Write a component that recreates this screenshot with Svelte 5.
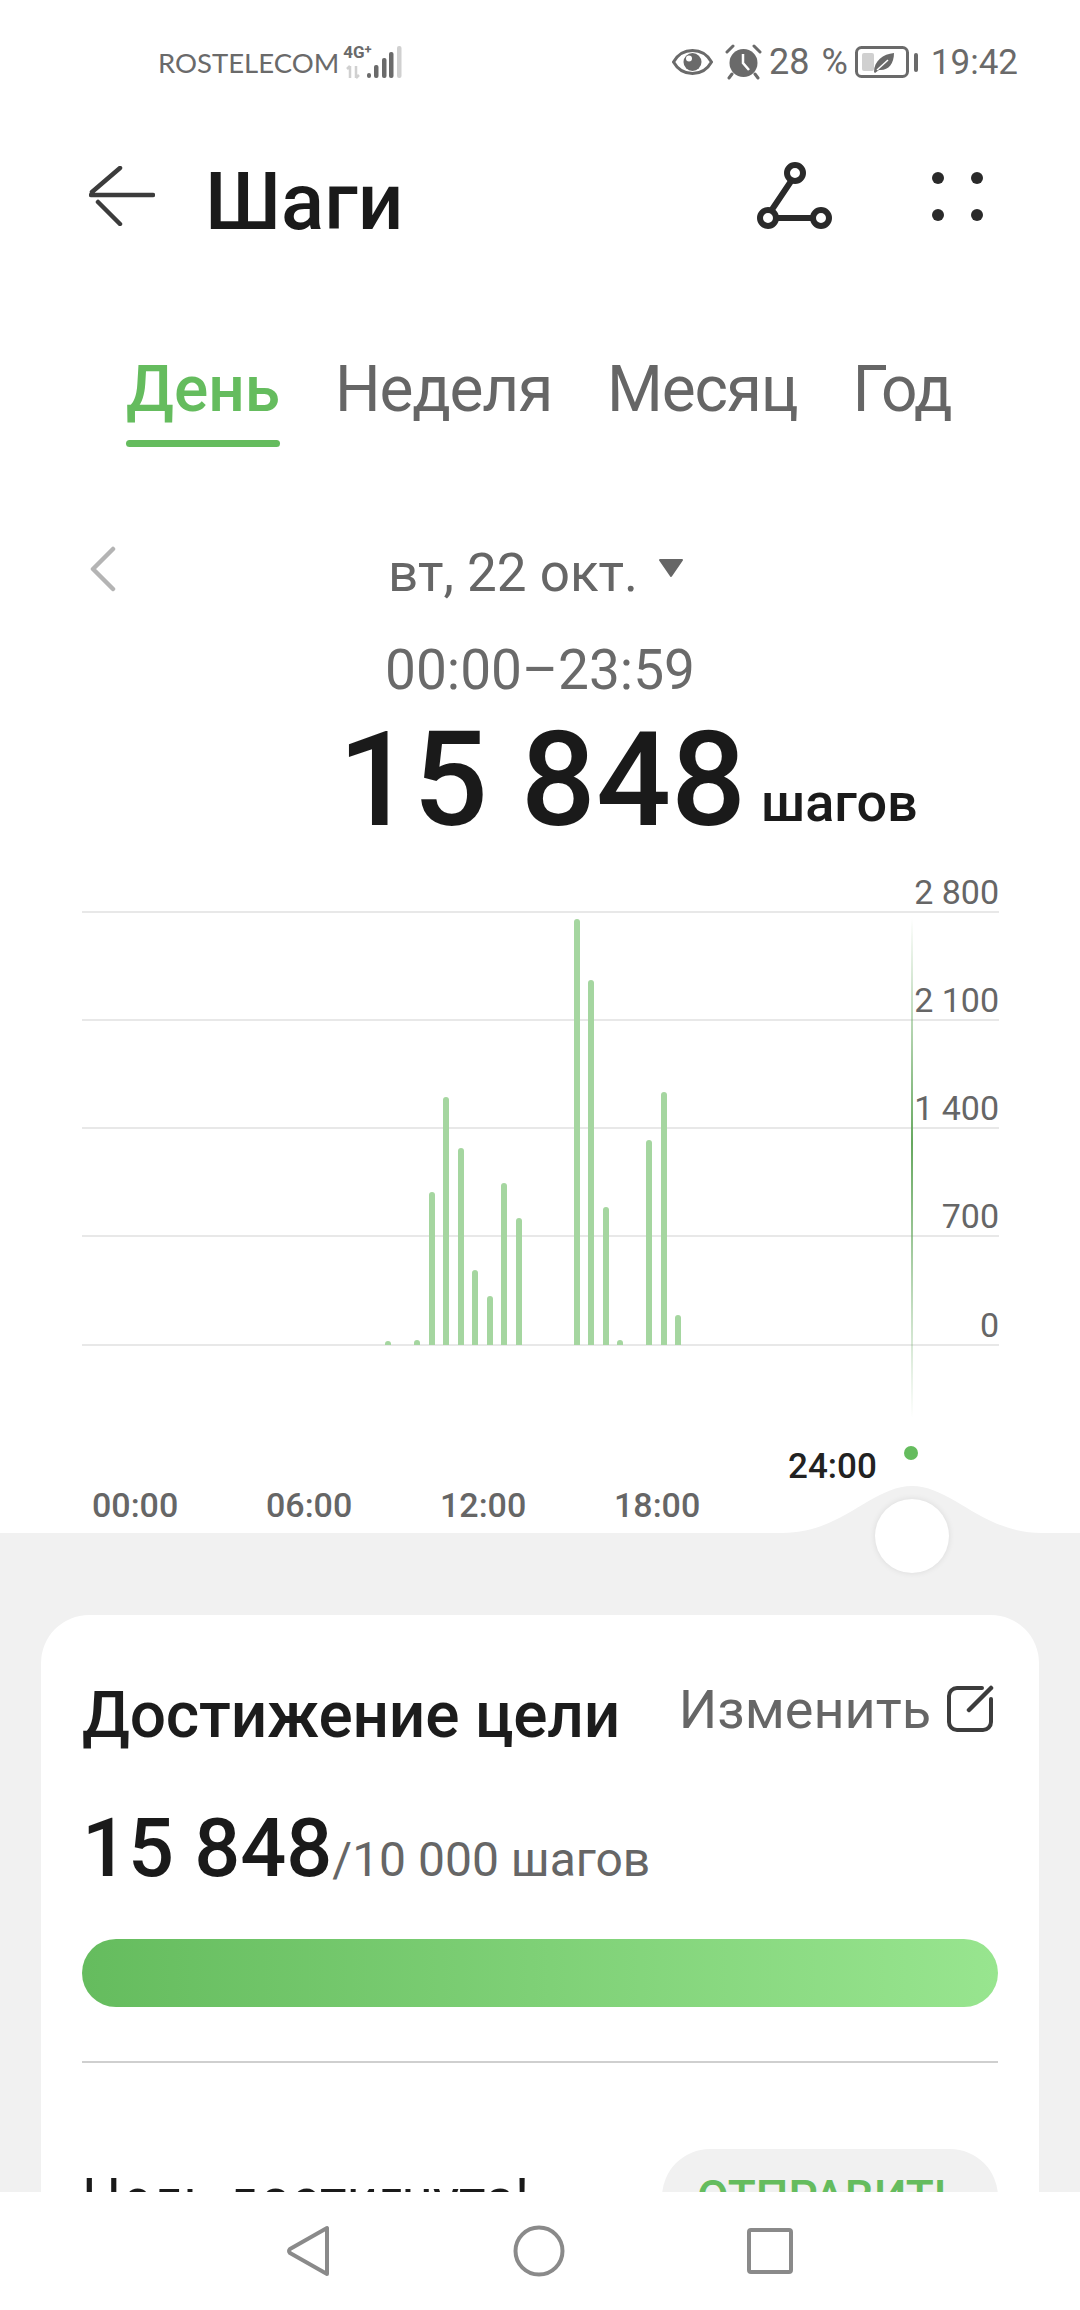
<script lang="ts">
  const tabs = ['День', 'Неделя', 'Месяц', 'Год'];
  const scale = [
    { label: '2 800', y: 0 },
    { label: '2 100', y: 108 },
    { label: '1 400', y: 216 },
    { label: '700', y: 324 },
    { label: '0', y: 433 }
  ];
  const hours = ['00:00', '06:00', '12:00', '18:00'];

  // bar centre on the chart, and height above the zero line
  const bars = [
    [306, 4], [335, 5], [350, 153], [364, 248], [379, 197], [393, 75], [408, 49],
    [422, 162], [437, 127], [495, 426], [509, 365], [524, 138], [538, 5],
    [567, 205], [582, 253], [596, 30]
  ];
</script>

<div class="phone">
  <div class="screen">
    <header class="status">
      <div class="carrier">
        <span>ROSTELECOM</span>
        <div class="signal">
          <span class="net">4G<sup>+</sup></span>
          <svg width="62" height="34" viewBox="0 0 62 34">
            <path d="M9 21v12M6 24l3-3M15 21v12M18 30l-3 3" stroke="#d0d0d0" stroke-width="2.500" fill="none" />
            <rect x="26" y="28" width="4" height="5" rx="2" fill="#6a6a6a" />
            <rect x="33" y="20" width="4.500" height="13" rx="2" fill="#6a6a6a" />
            <rect x="41" y="13" width="4.500" height="20" rx="2" fill="#6a6a6a" />
            <rect x="48" y="7" width="4.500" height="26" rx="2" fill="#6a6a6a" />
            <rect x="56" y="1" width="4.500" height="32" rx="2" fill="#d0d0d0" />
          </svg>
        </div>
      </div>
      <div class="sys">
        <svg class="eye" width="41" height="28" viewBox="0 0 41 28">
          <path d="M1.500 14C6 6 13 2.500 20.500 2.500S35 6 39.500 14C35 22 28 25.500 20.500 25.500S6 22 1.500 14Z" fill="none" stroke="#6a6a6a" stroke-width="3" />
          <circle cx="20.500" cy="14" r="9" fill="#6a6a6a" />
          <circle cx="17" cy="10.500" r="3" fill="#fff" />
        </svg>
        <svg class="alarm" width="37" height="36" viewBox="0 0 37 36">
          <circle cx="18.500" cy="19" r="14" fill="#6a6a6a" />
          <path d="M18 10v9l6 7" fill="none" stroke="#fff" stroke-width="2.500" />
          <path d="M2 8l6-6M35 8l-6-6M7 30l-3 4M30 30l3 4" stroke="#6a6a6a" stroke-width="3" stroke-linecap="round" />
        </svg>
        <span class="pct">28 %</span>
        <svg class="batt" width="63" height="32" viewBox="0 0 63 32">
          <rect x="1.500" y="1.500" width="51" height="29" rx="5" fill="none" stroke="#6a6a6a" stroke-width="3" />
          <rect x="7" y="7" width="12" height="18" rx="2" fill="#d0d0d0" />
          <path d="M19 26C19 15 28 8 39 7 39 18 33 25 24 24L20 27Z" fill="#6a6a6a" />
          <path d="M22 24 33 14" stroke="#fff" stroke-width="1.500" />
          <rect x="59" y="7" width="4" height="19" rx="2" fill="#6a6a6a" />
        </svg>
        <span class="clock">19:42</span>
      </div>
    </header>

    <div class="appbar">
      <svg class="back" width="66" height="60" viewBox="0 0 66 60">
        <path d="M2 29H64M31 2 3 26M31 58 9 36" fill="none" stroke="#3c3c3c" stroke-width="4.500" stroke-linecap="round" />
      </svg>
      <h1>Шаги</h1>
      <svg class="route" width="76" height="68" viewBox="0 0 76 68">
        <circle cx="38" cy="11" r="8" />
        <circle cx="11" cy="56" r="8" />
        <circle cx="64" cy="56" r="8" />
        <path d="M34.500 18.500 14 49M19 56H56" />
      </svg>
      <div class="dots"><i></i><i></i><i></i><i></i></div>
    </div>

    <nav class="tabs">
      {#each tabs as tab, i}
        <span class="tab" class:active={i === 0}>{tab}</span>
      {/each}
    </nav>

    <div class="date-row">
      <svg class="prev" width="28" height="46" viewBox="0 0 28 46">
        <path d="M25 3 5 23 25 43" fill="none" stroke="#b4b4b4" stroke-width="4.500" stroke-linecap="round" stroke-linejoin="round" />
      </svg>
      <span class="date">вт, 22 окт.</span>
      <svg class="caret" width="30" height="20" viewBox="0 0 30 20">
        <path d="M4 2H26L15 18Z" fill="#666" stroke="#666" stroke-width="2" stroke-linejoin="round" />
      </svg>
    </div>
    <div class="range">00:00–23:59</div>
    <div class="total"><span class="num">15 848</span><span class="unit">шагов</span></div>

    <div class="chart">
      {#each scale as s}
        <div class="grid" style="top: {s.y}px"></div>
        <span class="tick" style="top: {s.y - 39}px">{s.label}</span>
      {/each}
      {#each bars as [x, h]}
        <div class="bar" style="left: {x - 3}px; height: {h}px"></div>
      {/each}
      <div class="cursor"></div>
      <div class="dot"></div>
      <span class="now">24:00</span>
      {#each hours as h, i}
        <span class="hour" style="left: {10 + i * 174}px">{h}</span>
      {/each}
    </div>

    <div class="lower">
      <svg class="hump" width="260" height="48" viewBox="0 0 260 48">
        <path d="M0 47C60 47 90 0 130 0S200 47 260 47V48H0Z" fill="#f1f1f1" />
      </svg>
      <div class="thumb"></div>

      <section class="card">
        <div class="card-head">
          <h2>Достижение цели</h2>
          <span class="edit">Изменить</span>
          <svg class="edit-icon" width="48" height="48" viewBox="0 0 48 48">
            <path d="M36 3H11a8 8 0 0 0-8 8v26a8 8 0 0 0 8 8h26a8 8 0 0 0 8-8V14" fill="none" stroke="#3c3c3c" stroke-width="4" stroke-linecap="round" />
            <path d="M23 25 45 3" stroke="#3c3c3c" stroke-width="4.500" stroke-linecap="round" />
          </svg>
        </div>
        <div class="goal"><b>15 848</b><span>/10 000 шагов</span></div>
        <div class="progress"></div>
        <div class="divider"></div>
        <div class="done">
          <span>Цель достигнута!</span>
          <button>ОТПРАВИТЬ</button>
        </div>
      </section>
    </div>
  </div>

  <footer class="navbar">
    <svg width="44" height="52" viewBox="0 0 44 52">
      <path d="M40 3V49L3 28Q1 26 3 24Z" fill="none" stroke="#8a8a8a" stroke-width="4" stroke-linejoin="round" />
    </svg>
    <svg width="52" height="52" viewBox="0 0 52 52">
      <circle cx="26" cy="26" r="23.500" fill="none" stroke="#8a8a8a" stroke-width="4" />
    </svg>
    <svg width="46" height="46" viewBox="0 0 46 46">
      <rect x="2" y="2" width="42" height="42" rx="2" fill="none" stroke="#8a8a8a" stroke-width="4" />
    </svg>
  </footer>
</div>

<style>
  :global(body) {
    margin: 0;
    background: #fff;
  }

  .phone {
    width: 1080px;
    height: 2310px;
    display: flex;
    flex-direction: column;
    overflow: hidden;
    font-family: Roboto, "Noto Sans", sans-serif;
    color: #1a1a1a;
  }

  .screen {
    flex: 1;
    min-height: 0;
    overflow: hidden;
    display: flex;
    flex-direction: column;
  }

  .status {
    height: 124px;
    flex: none;
    display: flex;
    justify-content: space-between;
    align-items: center;
    padding: 0 62px 0 158px;
    color: #6a6a6a;
  }

  .carrier {
    display: flex;
    align-items: center;
    gap: 2px;
    font-family: Lato, Roboto, sans-serif;
    font-size: 27.500px;
  }

  .signal {
    position: relative;
    width: 62px;
    height: 34px;
  }

  /* network type sits over the signal bars */
  .net {
    position: absolute;
    left: 2px;
    top: -2px;
    font: 700 17px/18px Roboto, sans-serif;
  }

  .net sup {
    font-size: 13px;
    line-height: 0;
    vertical-align: 4px;
  }

  .sys {
    display: flex;
    align-items: center;
    gap: 10px;
    font-size: 35px;
  }

  .eye {
    margin-right: 2px;
  }

  .alarm {
    margin-right: -3px;
  }

  .pct {
    font-size: 36px;
    word-spacing: 3px;
  }

  .batt {
    margin-left: -3px;
  }

  .clock {
    margin-left: 3px;
  }

  .appbar {
    height: 144px;
    flex: none;
    display: flex;
    align-items: center;
    padding: 0 0 0 89px;
  }

  .appbar h1 {
    flex: 1;
    margin: 12px 0 0 50px;
    font-size: 80px;
    font-weight: 500;
    line-height: 1;
  }

  .route {
    margin-right: 99px;
  }

  .route circle,
  .route path {
    fill: none;
    stroke: #2a2a2a;
    stroke-width: 6;
  }

  .dots {
    display: grid;
    grid-template-columns: 12px 12px;
    grid-template-rows: 12px 12px;
    gap: 25px 27px;
    margin-right: 97px;
  }

  .dots i {
    display: block;
    border-radius: 50%;
    background: #2a2a2a;
  }

  .tabs {
    flex: none;
    display: flex;
    gap: 55px;
    padding: 87px 0 0 126px;
    height: 101px;
  }

  .tab {
    position: relative;
    height: 70px;
    font-size: 64px;
    line-height: 70px;
    letter-spacing: -1.200px;
    color: #666;
  }

  .tab.active {
    color: #65bc5e;
    font-weight: 500;
    letter-spacing: 0;
  }

  .tab.active::after {
    content: '';
    position: absolute;
    left: 0;
    right: 0;
    top: 85px;
    height: 7px;
    border-radius: 4px;
    background: #65bc5e;
  }

  .date-row {
    position: relative;
    flex: none;
    margin-top: 87px;
    height: 60px;
    display: flex;
    justify-content: center;
    align-items: center;
    padding-right: 6px;
    color: #666;
    font-size: 53px;
  }

  .prev {
    position: absolute;
    left: 88px;
    top: 3px;
  }

  .caret {
    margin-left: 18px;
    margin-bottom: 10px;
  }

  .range {
    flex: none;
    margin-top: 37px;
    text-align: center;
    font-size: 55px;
    line-height: 60px;
    color: #6a6a6a;
  }

  .total {
    flex: none;
    margin-top: 19px;
    height: 122px;
    padding-left: 338px;
    line-height: 122px;
    white-space: nowrap;
  }

  .num {
    font-size: 132px;
    font-weight: 500;
  }

  .unit {
    margin-left: 15px;
    font-size: 54px;
    font-weight: 500;
    vertical-align: 4px;
  }

  .chart {
    position: relative;
    flex: none;
    margin: 70px 0 0 82px;
    width: 917px;
    height: 622px;
  }

  .grid {
    position: absolute;
    left: 0;
    right: 0;
    height: 2px;
    background: #e8e8e8;
  }

  .tick {
    position: absolute;
    right: 0;
    font-size: 34px;
    line-height: 40px;
    color: #666;
  }

  .bar {
    position: absolute;
    bottom: 188px;
    width: 6px;
    border-radius: 3px 3px 0 0;
    background: #a5d6a0;
  }

  .cursor {
    position: absolute;
    left: 829px;
    top: 7px;
    width: 2px;
    height: 500px;
    background: linear-gradient(to bottom, #ffffff00, #66a85f 45%, #ffffff00);
  }

  .dot {
    position: absolute;
    left: 822px;
    top: 535px;
    width: 14px;
    height: 14px;
    border-radius: 50%;
    background: #65bc5e;
  }

  .now {
    position: absolute;
    left: 706px;
    top: 535px;
    font-size: 35px;
    line-height: 42px;
    font-weight: 500;
    color: #222;
  }

  .hour {
    position: absolute;
    top: 573px;
    font-size: 34px;
    line-height: 42px;
    font-weight: 500;
    color: #666;
  }

  .lower {
    position: relative;
    flex: 1;
    background: #f1f1f1;
    padding: 82px 41px 0;
  }

  .hump {
    position: absolute;
    left: 782px;
    top: -47px;
  }

  .thumb {
    position: absolute;
    left: 875px;
    top: -34px;
    width: 74px;
    height: 74px;
    border-radius: 50%;
    background: #fff;
    box-shadow: 0 0 6px #00000018;
  }

  .card {
    background: #fff;
    border-radius: 48px 48px 0 0;
    padding: 56px 41px 0;
    height: 600px;
  }

  .card-head {
    display: flex;
    align-items: center;
    height: 76px;
  }

  .card-head h2 {
    flex: 1;
    margin: 12px 0 0;
    font-size: 64px;
    font-weight: 500;
    letter-spacing: -0.200px;
    color: #1c1c1c;
  }

  .edit {
    font-size: 54px;
    color: #666;
    margin-right: 15px;
  }

  .edit-icon {
    margin-right: 4px;
  }

  .goal {
    margin-top: 54px;
    height: 82px;
    display: flex;
    align-items: baseline;
    color: #666;
    font-size: 48px;
  }

  .goal b {
    font-size: 81px;
    font-weight: 500;
    color: #1a1a1a;
  }

  .progress {
    margin-top: 56px;
    height: 68px;
    border-radius: 34px;
    background: linear-gradient(to right, #65bc5e, #98e58f);
  }

  .divider {
    margin-top: 54px;
    height: 2px;
    background: #cfcfcf;
  }

  .done {
    margin-top: 86px;
    display: flex;
    justify-content: space-between;
    align-items: flex-start;
  }

  .done span {
    margin-top: 18px;
    font-size: 55px;
    color: #1a1a1a;
  }

  .done button {
    width: 336px;
    height: 96px;
    border: 0;
    border-radius: 48px;
    background: #f1f1f1;
    color: #65bc5e;
    font: 500 46px Roboto, sans-serif;
  }

  .navbar {
    height: 118px;
    flex: none;
    background: #fff;
    display: flex;
    justify-content: center;
    align-items: center;
    gap: 182px;
  }
</style>
